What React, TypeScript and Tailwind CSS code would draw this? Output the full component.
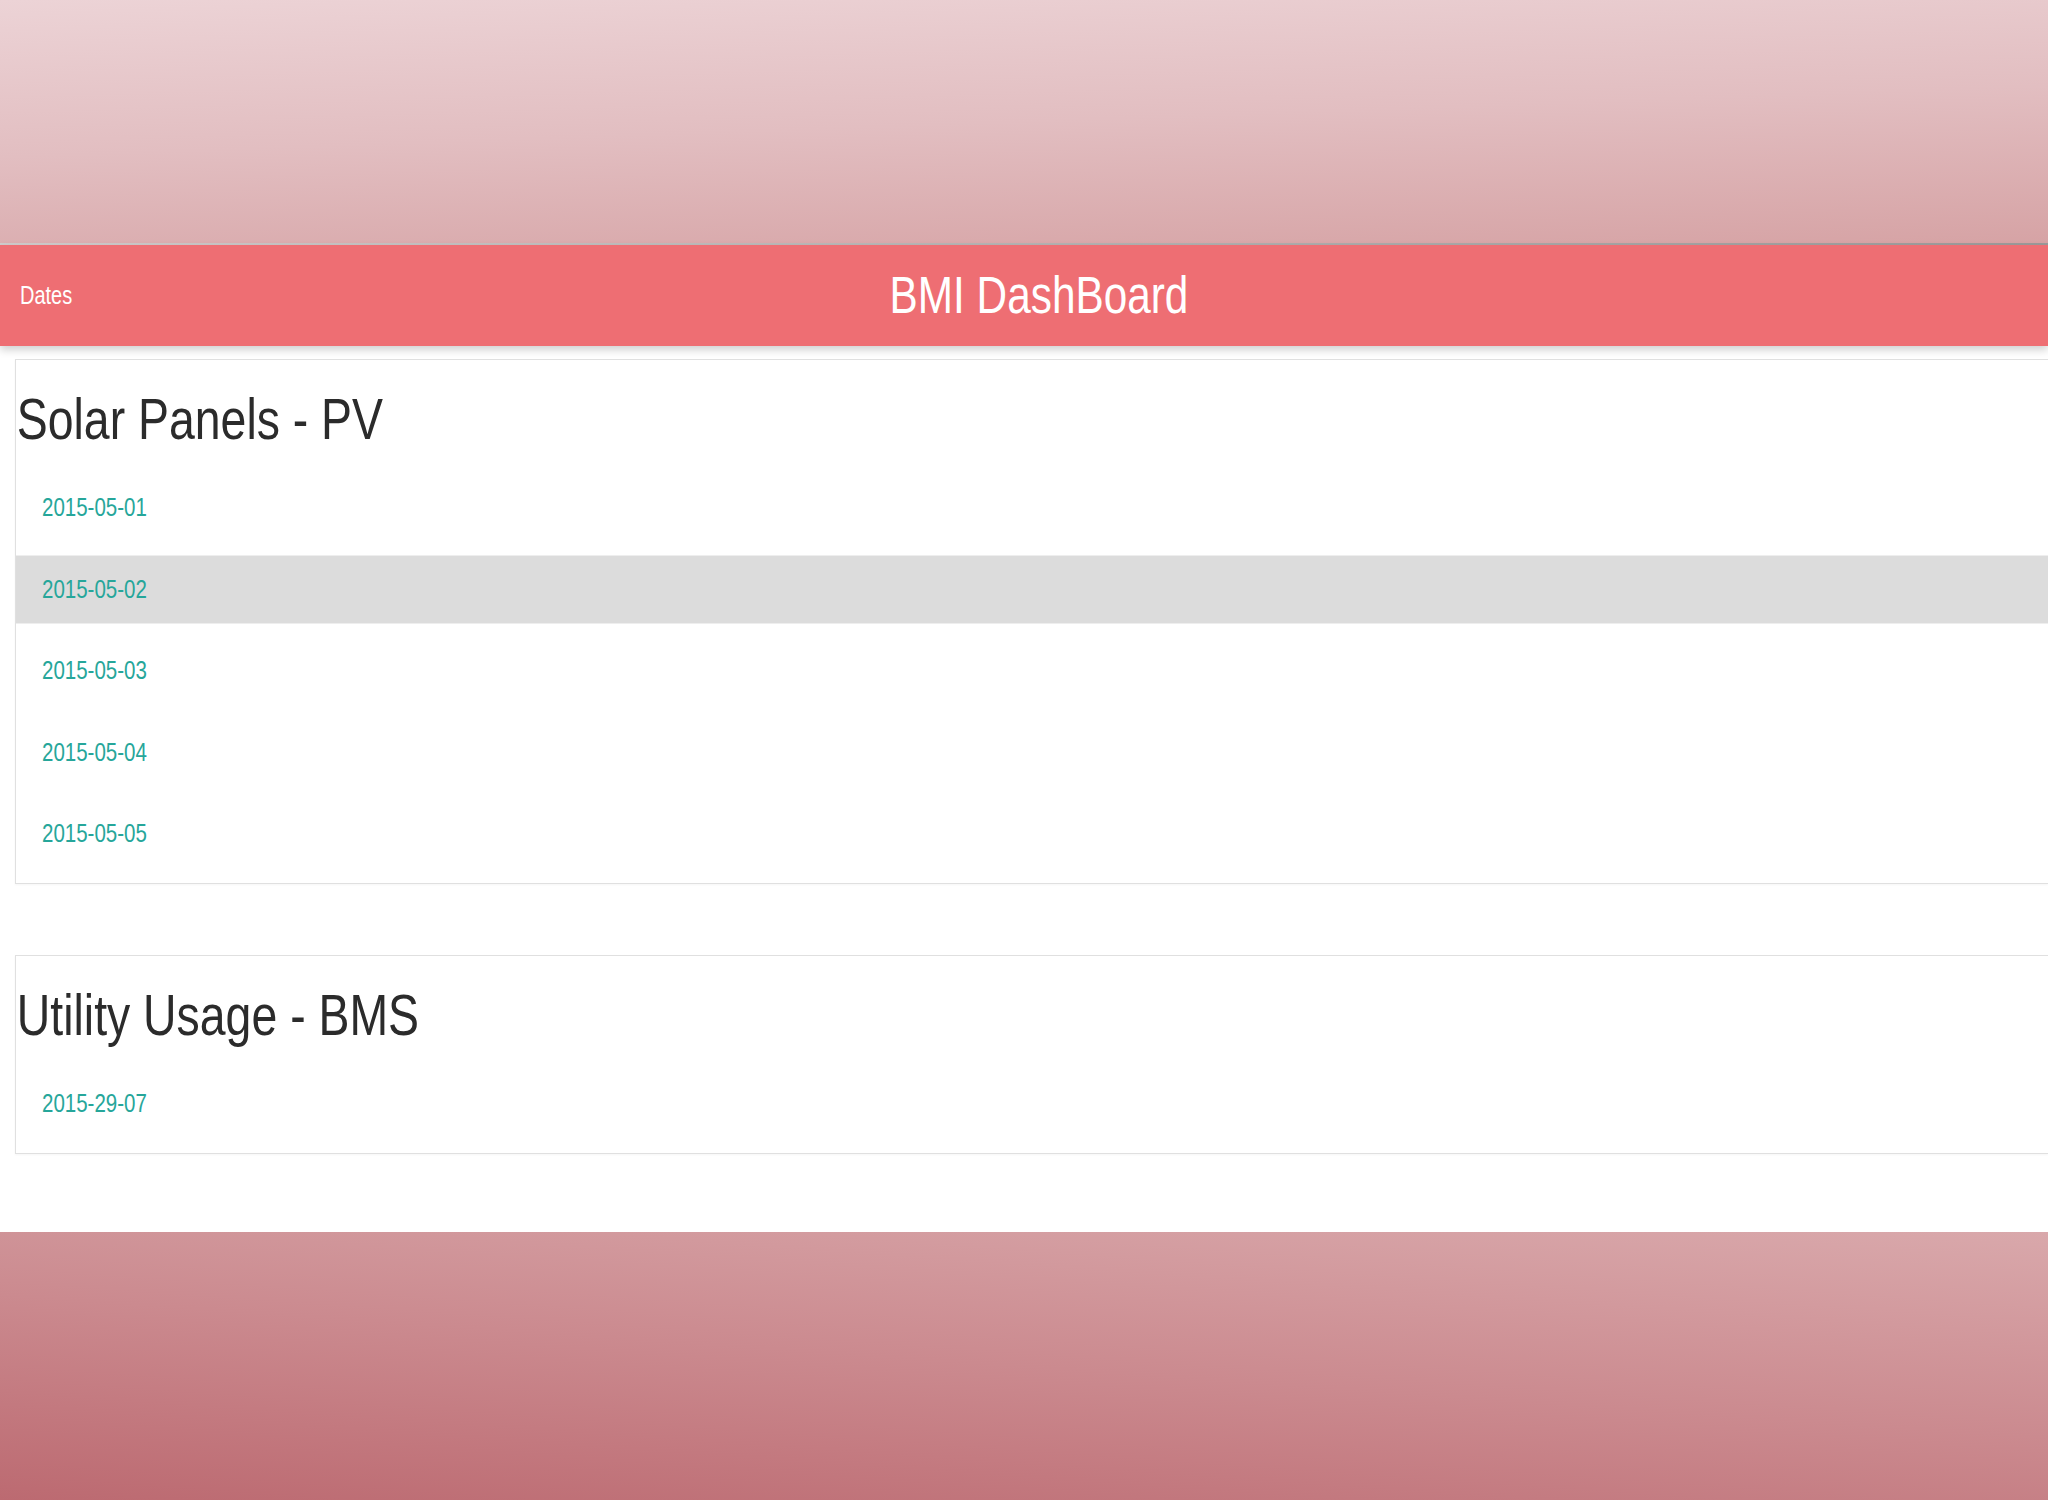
const font = { fontFamily: '"Liberation Sans", Arial, sans-serif' }

const solarDates = ['2015-05-01', '2015-05-02', '2015-05-03', '2015-05-04', '2015-05-05']
const utilityDates = ['2015-29-07']

function DateRow({ label, active }: { label: string; active?: boolean }) {
  return (
    <li
      className={`flex h-[69px] items-center pl-[26px] ${
        active ? 'border-y border-[#eeeeee] bg-[#dcdcdc]' : ''
      }`}
    >
      <a className="inline-block origin-left scale-x-[0.82] text-[25px] leading-none text-[#26a69a]" href="#">
        {label}
      </a>
    </li>
  )
}

function Section({ title, dates, active }: { title: string; dates: string[]; active?: string }) {
  return (
    <div className="border border-r-0 border-[#e0e0e0] bg-white pt-[30px] pb-[15px] shadow-[0_1px_2px_rgba(0,0,0,0.04)]">
      <h2 className="origin-left scale-x-[0.8] pl-px text-[58px] leading-none font-normal text-[#2b2b2b]">{title}</h2>
      <ul className="mt-[25px] flex flex-col gap-[12.5px]">
        {dates.map((d) => (
          <DateRow key={d} label={d} active={d === active} />
        ))}
      </ul>
    </div>
  )
}

export default function App() {
  return (
    <div className="flex min-h-[1500px] w-full flex-col overflow-hidden bg-white" style={font}>
      <div className="h-[243px] bg-[linear-gradient(178deg,#ecd3d6_0%,#e2bec1_50%,#d6a3a5_100%)]" />
      <div className="h-[2px] bg-[linear-gradient(90deg,#d0cccc,#9c9a9a)]" />

      <nav className="relative z-10 flex h-[101px] items-center bg-[#ee6e73] px-[20px] shadow-[0_4px_8px_rgba(0,0,0,0.18)]">
        <span className="inline-block origin-left scale-x-[0.8] text-[25px] leading-none text-white">Dates</span>
        <span className="absolute left-[calc(50%+15px)] -translate-x-1/2 scale-x-[0.83] text-[51px] leading-none text-white">
          BMI DashBoard
        </span>
      </nav>

      <main className="flex flex-col gap-[71px] pt-[13px] pb-[78px] pl-[15px]">
        <Section title="Solar Panels - PV" dates={solarDates} active="2015-05-02" />
        <Section title="Utility Usage - BMS" dates={utilityDates} />
      </main>

      <div className="h-[268px] bg-[linear-gradient(184deg,#d9a8ab_0%,#cb8a8f_50%,#bc6a71_100%)]" />
    </div>
  )
}
